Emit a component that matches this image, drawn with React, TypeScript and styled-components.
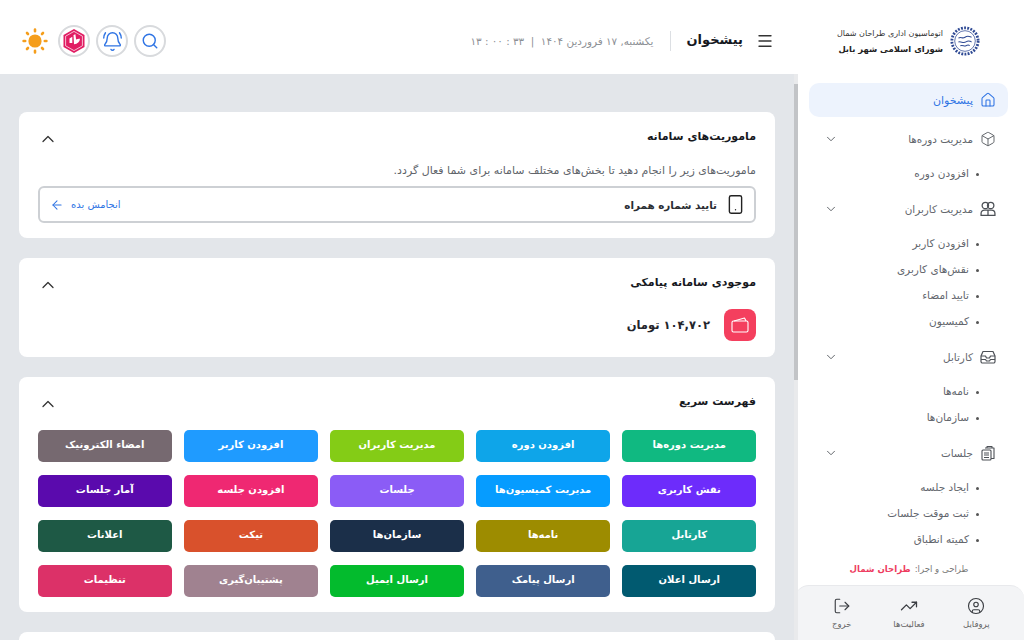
import React from "react";
import styled, { createGlobalStyle } from "styled-components";
import { Home, Box, ChevronDown, ChevronUp, Menu, Search, BellRing, Smartphone, ArrowLeft, CircleUser, TrendingUp, LogOut } from "lucide-react";

const Global = createGlobalStyle`
  html, body { margin: 0; padding: 0; height: 100%; overflow: hidden; background: #fff; }
  #root { height: 100%; }
  * { box-sizing: border-box; }
  body { font-family: "DejaVu Sans", "Noto Sans", "Liberation Sans", sans-serif; }
`;

const Page = styled.div`
  width: 1024px; height: 640px; display: flex; flex-direction: column; overflow: hidden; background: #fff;
`;
const Header = styled.header`
  height: 74px; flex: none; display: flex; align-items: center; justify-content: space-between;
  padding: 8px 44px 0 22px; background: #fff;
`;
const HeaderStart = styled.div`display: flex; align-items: center;`;
const Brand = styled.div`display: flex; align-items: center; gap: 7px; width: 142px; margin-left: 64px; svg { flex: none; }`;
const BrandText = styled.div`display: flex; flex-direction: column; gap: 2px; white-space: nowrap;`;
const BrandSmall = styled.span`font-size: 8px; line-height: 13px; color: #333;`;
const BrandBold = styled.span`font-size: 8.4px; line-height: 14px; font-weight: 700; color: #222;`;
const MenuBtn = styled.span`display: flex; color: #333; margin-left: 13px;`;
const PageTitle = styled.h1`margin: 0; font-size: 13px; font-weight: 700; color: #15181f; line-height: 20px; padding-bottom: 3px;`;
const Divider = styled.span`width: 1px; height: 20px; background: #dcdfe3; margin: 0 16px;`;
const DateText = styled.span`font-size: 10.4px; color: #8d9095; white-space: nowrap;`;
const HeaderEnd = styled.div`display: flex; align-items: center; gap: 6px; flex-direction: row-reverse;`;
const RoundBtn = styled.span`
  width: 32px; height: 32px; border-radius: 50%; border: 2px solid #d8dadd; display: flex; align-items: center; justify-content: center; color: #2f74e4;
`;
const SunWrap = styled.span`display: flex; margin-right: 4px;`;

const Body = styled.div`flex: 1; min-height: 0; display: flex;`;
const Sidebar = styled.aside`
  width: 230px; flex: none; display: flex; flex-direction: column; background: #fff; position: relative;
`;
const Track = styled.span`
  position: absolute; left: 0; top: 0; bottom: 0; width: 4px; background: #e9eaec;
`;
const Thumb = styled.span`
  position: absolute; left: 0; top: 10px; width: 4px; height: 296px; background: #c2c4c7;
`;
const Nav = styled.nav`flex: none; height: 478px; padding: 9px 16px 0 15px; display: flex; flex-direction: column; > * { flex: none; }`;
const ActiveRow = styled.div`
  height: 34px; border-radius: 10px; background: #edf3fd; color: #2f74e4; display: flex; align-items: center; gap: 7px; padding-right: 12px; font-size: 11px; margin-bottom: 5px;
`;
const GroupRow = styled.div`
  height: 34px; display: flex; align-items: center; gap: 7px; padding: 0 12px 0 15px; font-size: 10.4px; color: #62666d;
  svg { color: #4d5157; flex: none; }
`;
const Spacer = styled.span`flex: 1;`;
const SubList = styled.ul<{ $last?: boolean }>`list-style: none; margin: 4px 0 ${p => (p.$last ? 0 : 6)}px; padding: 0;`;
const SubItem = styled.li`
  height: 26px; display: flex; align-items: center; gap: 7px; padding-right: 29px; font-size: 10.5px; color: #62666d;
  &::before { content: ""; width: 3px; height: 3px; border-radius: 50%; background: #555; flex: none; margin-top: 2px; }
`;
const Credit = styled.div`
  height: 33px; display: flex; align-items: center; justify-content: center; gap: 4px; font-size: 8.6px; color: #777;
  b { color: #ee3c60; font-weight: 700; }
`;
const Dock = styled.div`
  height: 55px; flex: none; margin-left: 1px; background: #f3f4f6; border-radius: 14px 14px 0 0; border-top: 1px solid #e8e9ec; display: grid; grid-template-columns: repeat(3, 1fr); padding: 11px 14px 0 13px;
`;
const DockItem = styled.div`
  display: flex; flex-direction: column; align-items: center; gap: 3px; font-size: 8.5px; color: #666; line-height: 12px;
  svg { color: #3a3d42; }
`;

const Main = styled.main`
  flex: 1; min-width: 0; overflow: hidden; background: #e3e6ea; padding: 38px 19px 0; display: flex; flex-direction: column; gap: 20px;
`;
const Card = styled.section<{ $end?: number }>`
  flex: none; background: #fff; border-radius: 8px; padding: 16px 19px ${p => p.$end ?? 16}px;
`;
const CardHead = styled.div`display: flex; align-items: center; justify-content: space-between; height: 22px; svg { color: #333; }`;
const CardTitle = styled.h2`margin: 0; font-size: 11px; font-weight: 700; color: #17191e; line-height: 20px; padding-bottom: 5px;`;
const Desc = styled.p`margin: 12px 0 6px; font-size: 11px; line-height: 18px; color: #60646a;`;
const Mission = styled.div`
  height: 37px; border: 2px solid #cdd0d4; border-radius: 6px; display: flex; align-items: center; justify-content: space-between; padding: 0 8px 0 10px;
`;
const MissionInfo = styled.div`display: flex; align-items: center; gap: 8px; font-size: 10.4px; font-weight: 700; color: #2a2d33; svg { color: #222; }`;
const MissionAction = styled.div`display: flex; align-items: center; gap: 7px; font-size: 10px; color: #2f74e4;`;
const Balance = styled.div`display: flex; align-items: center; gap: 14px; margin-top: 13px;`;
const WalletBox = styled.span`width: 32px; height: 32px; border-radius: 8px; background: #f43f5e; display: flex; align-items: center; justify-content: center; color: #fff;`;
const Amount = styled.span`font-size: 11.5px; font-weight: 700; color: #23252b;`;
const QuickGrid = styled.div`display: grid; grid-template-columns: repeat(5, 1fr); gap: 13px 12.6px; margin-top: 15px;`;
const Quick = styled.div<{ $c: string }>`
  height: 32px; border-radius: 5px; background: ${p => p.$c}; color: #fff; display: flex; align-items: center; justify-content: center; font-size: 10px; font-weight: 700; white-space: nowrap; padding-bottom: 3px;
`;

const quick: [string, string][] = [
  ["مدیریت دوره‌ها", "#10b981"], ["افزودن دوره", "#0ea5e9"], ["مدیریت کاربران", "#84cc16"], ["افزودن کاربر", "#1f9bff"], ["امضاء الکترونیک", "#766970"],
  ["نقش کاربری", "#6d2cfb"], ["مدیریت کمیسیون‌ها", "#069cff"], ["جلسات", "#8b5cf6"], ["افزودن جلسه", "#ef2872"], ["آمار جلسات", "#5a0aad"],
  ["کارتابل", "#17a595"], ["نامه‌ها", "#9d8c00"], ["سازمان‌ها", "#1b2f49"], ["تیکت", "#d9512c"], ["اعلانات", "#1e5945"],
  ["ارسال اعلان", "#015a70"], ["ارسال پیامک", "#3f5f8d"], ["ارسال ایمیل", "#03bb2d"], ["پشتیبان‌گیری", "#a08290"], ["تنظیمات", "#dc3168"],
];

const Seal = () => (
  <svg width="30" height="30" viewBox="0 0 32 32" fill="none">
    <circle cx="16" cy="16" r="14" stroke="#2f4a94" strokeWidth="3" strokeDasharray="2 1.4" />
    <circle cx="16" cy="16" r="11" stroke="#2f4a94" strokeWidth="0.8" />
    <path d="M9 13c3-2 4 1 7-1s4-1 7 0M9 17c3-1 5 2 8 0s3-1 6 0M11 21c3-1 4 1 6 0s3-1 4 0" stroke="#2f4a94" strokeWidth="1.1" />
  </svg>
);
const SunIcon = () => (
  <svg width="26" height="26" viewBox="0 0 26 26" fill="#f59e1c" stroke="#f59e1c">
    <circle cx="13" cy="13" r="6.6" stroke="none" />
    <path strokeWidth="2.6" strokeLinecap="round" d="M13 1.6v1.6M13 22.8v1.6M1.6 13h1.6M22.8 13h1.6M5 5l1 1M20 20l1 1M21 5l-1 1M6 20l-1 1" />
  </svg>
);
const Hex = () => (
  <svg width="24" height="26" viewBox="0 0 24 26" fill="none">
    <path d="M12 1l10.5 6v12L12 25 1.5 19V7z" fill="#e11d63" />
    <path d="M12 3.4l8.4 4.8v9.6L12 22.6l-8.4-4.8V8.2z" stroke="#fff" strokeWidth="0.7" />
    <path d="M7.5 10.5l2.8-1.8v6.2H7.5z" fill="#fff" />
    <path d="M11.5 7l1.9-.8.7 5.2c1.4-.6 2.7-.8 3.9-.6-.3 3.2-2.4 5.2-6 5.4z" fill="#fff" />
  </svg>
);
const People = () => (
  <svg width="16" height="16" viewBox="0 0 15 15" fill="none" stroke="currentColor" strokeWidth="1.2">
    <circle cx="5" cy="4.2" r="3" /><circle cx="10" cy="4.2" r="3" />
    <path d="M1 13.5v-1.8c0-2 1.5-3.2 3.3-3.2h6.4c1.8 0 3.3 1.2 3.3 3.2v1.8z" /><path d="M7.5 8.5v5" />
  </svg>
);
const Tray = () => (
  <svg width="16" height="16" viewBox="0 0 16 16" fill="none" stroke="currentColor" strokeWidth="1.2" strokeLinejoin="round">
    <path d="M1 7l2-4.5h10L15 7v5.5a1.5 1.5 0 0 1-1.5 1.5h-11A1.5 1.5 0 0 1 1 12.5z" />
    <path d="M1 7h4.5l1 2h3l1-2H15M1 10.5h4.5l1 1.5h3l1-1.5H15" />
  </svg>
);
const Clipboards = () => (
  <svg width="16" height="16" viewBox="0 0 16 16" fill="none" stroke="currentColor" strokeWidth="1.1" strokeLinejoin="round">
    <path d="M7 3V1.5h5V3M5 3h9v10.5H11" />
    <rect x="2" y="5" width="9" height="10" rx="1" />
    <path d="M4 8h5M4 10h5M4 12.5h5" />
  </svg>
);
const WalletCard = () => (
  <svg width="18" height="16" viewBox="0 0 18 16" fill="none" stroke="currentColor" strokeWidth="1.1" strokeLinejoin="round">
    <rect x="1" y="4" width="16" height="11" rx="1.5" />
    <path d="M3 4l10.5-3L15 4" />
  </svg>
);

const Group = ({ icon, label, items, last }: { icon: React.ReactNode; label: string; items: string[]; last?: boolean }) => (
  <>
    <GroupRow>{icon}<span>{label}</span><Spacer /><ChevronDown size={14} strokeWidth={1.5} /></GroupRow>
    <SubList $last={last}>{items.map(i => <SubItem key={i}>{i}</SubItem>)}</SubList>
  </>
);

export default function App() {
  return (
    <Page dir="rtl">
      <Global />
      <Header>
        <HeaderStart>
          <Brand>
            <Seal />
            <BrandText>
              <BrandSmall>اتوماسیون اداری طراحان شمال</BrandSmall>
              <BrandBold>شورای اسلامی شهر بابل</BrandBold>
            </BrandText>
          </Brand>
          <MenuBtn><Menu size={18} strokeWidth={1.8} /></MenuBtn>
          <PageTitle>پیشخوان</PageTitle>
          <Divider />
          <DateText>یکشنبه, ۱۷ فروردین ۱۴۰۴ &nbsp;|&nbsp; <bdi dir="ltr">۱۳ : ۰۰ : ۳۳</bdi></DateText>
        </HeaderStart>
        <HeaderEnd>
          <SunWrap><SunIcon /></SunWrap>
          <RoundBtn><Hex /></RoundBtn>
          <RoundBtn><BellRing size={21} strokeWidth={1.6} /></RoundBtn>
          <RoundBtn><Search size={18} strokeWidth={1.9} /></RoundBtn>
        </HeaderEnd>
      </Header>
      <Body>
        <Sidebar>
          <Track /><Thumb />
          <Nav>
            <ActiveRow><Home size={16} strokeWidth={1.6} /><span>پیشخوان</span></ActiveRow>
            <Group icon={<Box size={16} strokeWidth={1.3} />} label="مدیریت دوره‌ها" items={["افزودن دوره"]} />
            <Group icon={<People />} label="مدیریت کاربران" items={["افزودن کاربر", "نقش‌های کاربری", "تایید امضاء", "کمیسیون"]} />
            <Group icon={<Tray />} label="کارتابل" items={["نامه‌ها", "سازمان‌ها"]} />
            <Group icon={<Clipboards />} label="جلسات" items={["ایجاد جلسه", "ثبت موقت جلسات", "کمیته انطباق"]} last />
          </Nav>
          <Credit><span>طراحی و اجرا:</span><b>طراحان شمال</b></Credit>
          <Dock>
            <DockItem><CircleUser size={18} strokeWidth={1.5} />پروفایل</DockItem>
            <DockItem><TrendingUp size={18} strokeWidth={1.7} />فعالیت‌ها</DockItem>
            <DockItem><LogOut size={18} strokeWidth={1.5} />خروج</DockItem>
          </Dock>
        </Sidebar>
        <Main>
          <Card $end={15}>
            <CardHead><CardTitle>ماموریت‌های سامانه</CardTitle><ChevronUp size={20} strokeWidth={1.5} /></CardHead>
            <Desc>ماموریت‌های زیر را انجام دهید تا بخش‌های مختلف سامانه برای شما فعال گردد.</Desc>
            <Mission>
              <MissionInfo><Smartphone size={21} strokeWidth={1.6} />تایید شماره همراه</MissionInfo>
              <MissionAction>انجامش بده<ArrowLeft size={14} strokeWidth={1.8} /></MissionAction>
            </Mission>
          </Card>
          <Card>
            <CardHead><CardTitle>موجودی سامانه پیامکی</CardTitle><ChevronUp size={20} strokeWidth={1.5} /></CardHead>
            <Balance><WalletBox><WalletCard /></WalletBox><Amount>۱۰۴,۷۰۲ تومان</Amount></Balance>
          </Card>
          <Card $end={15}>
            <CardHead><CardTitle>فهرست سریع</CardTitle><ChevronUp size={20} strokeWidth={1.5} /></CardHead>
            <QuickGrid>{quick.map(([t, c]) => <Quick key={t} $c={c}>{t}</Quick>)}</QuickGrid>
          </Card>
          <Card />
        </Main>
      </Body>
    </Page>
  );
}
